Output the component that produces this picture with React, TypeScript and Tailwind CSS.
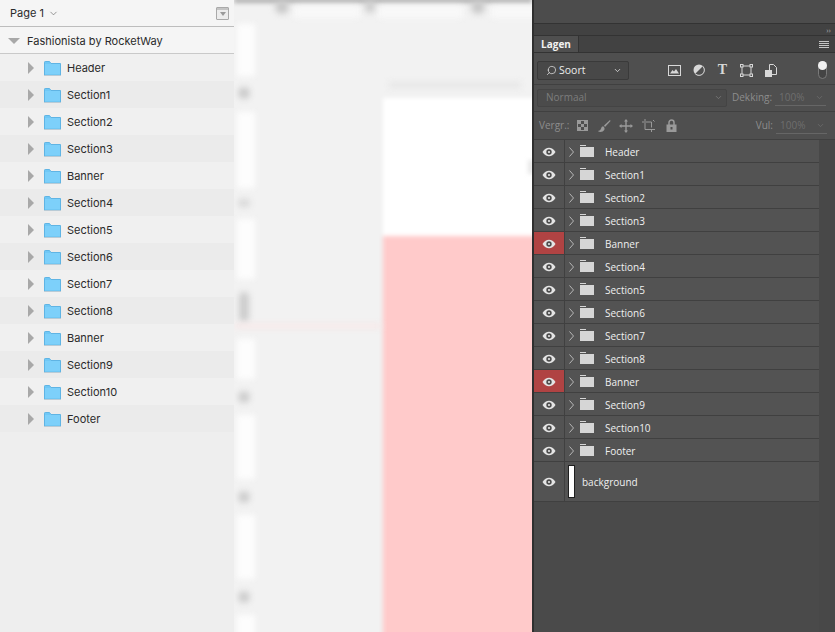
import { ChevronDown, Search } from "lucide-react";

const LAYERS = [
  "Header",
  "Section1",
  "Section2",
  "Section3",
  "Banner",
  "Section4",
  "Section5",
  "Section6",
  "Section7",
  "Section8",
  "Banner",
  "Section9",
  "Section10",
  "Footer",
];

function BlueFolder() {
  return (
    <svg width="17" height="15" viewBox="0 0 17 15" className="shrink-0">
      <path d="M0.5 14V1.2Q0.5 0.5 1.2 0.5H5.5L7 2.5H16.5V14Z" fill="#70c8f6" stroke="#5fb4e4" strokeWidth="1" />
      <rect x="1" y="3" width="15" height="10.5" fill="#7dd0fa" />
      <rect x="0" y="14" width="17" height="1" fill="#b9cbd6" />
    </svg>
  );
}

function GreyFolder() {
  return (
    <svg width="14" height="12" viewBox="0 0 14 12" className="shrink-0">
      <rect x="0" y="0" width="6" height="1" fill="#d6d6d6" />
      <rect x="0" y="2" width="14" height="10" fill="#d6d6d6" />
    </svg>
  );
}

function Eye() {
  return (
    <svg width="14" height="10" viewBox="0 0 14 10">
      <path d="M0.5 5C2.5 2 4.5 0.8 7 0.8S11.5 2 13.5 5C11.5 8 9.5 9.2 7 9.2S2.5 8 0.5 5Z" fill="#e4e4e4" />
      <circle cx="7" cy="5" r="2.7" fill="#4c4c4c" />
      <circle cx="7" cy="5" r="1.1" fill="#e4e4e4" />
    </svg>
  );
}

function ToolIcons() {
  return (
    <div className="flex items-center gap-[12px] text-[#d8d8d8]">
      <svg width="13" height="11" viewBox="0 0 13 11">
        <rect x="0.5" y="0.5" width="12" height="10" fill="none" stroke="currentColor" />
        <path d="M2 8.5L4.5 5L6 6.5L8 4L11 8.5Z" fill="currentColor" />
      </svg>
      <svg width="12" height="12" viewBox="0 0 12 12">
        <circle cx="6" cy="6" r="5.5" fill="currentColor" />
        <path d="M10 2L2 10A5.5 5.5 0 0 0 10 2Z" fill="#4f4f4f" />
        <path d="M9.8 2.3A5 5 0 0 1 2.3 9.8" fill="none" stroke="currentColor" />
      </svg>
      <span className="w-[11px] text-center font-['Liberation_Serif',serif] text-[14px] leading-none font-bold">T</span>
      <svg width="13" height="13" viewBox="0 0 13 13">
        <rect x="2" y="2" width="9" height="9" fill="none" stroke="currentColor" />
        <rect x="0.5" y="0.5" width="2.5" height="2.5" fill="#4f4f4f" stroke="currentColor" />
        <rect x="10" y="0.5" width="2.5" height="2.5" fill="#4f4f4f" stroke="currentColor" />
        <rect x="0.5" y="10" width="2.5" height="2.5" fill="#4f4f4f" stroke="currentColor" />
        <rect x="10" y="10" width="2.5" height="2.5" fill="#4f4f4f" stroke="currentColor" />
      </svg>
      <svg width="12" height="13" viewBox="0 0 12 13">
        <path d="M4.5 0.5H8.5L11.5 3.5V10.5H4.5Z" fill="none" stroke="currentColor" />
        <rect x="0" y="6" width="7" height="7" fill="currentColor" />
      </svg>
    </div>
  );
}

function LockIcons() {
  return (
    <div className="flex items-center text-[#9a9a9a]">
      <svg width="11" height="11" viewBox="0 0 11 11">
        <rect x="0.5" y="0.5" width="10" height="10" fill="none" stroke="currentColor" />
        <rect x="1" y="1" width="3" height="3" fill="currentColor" />
        <rect x="7" y="1" width="3" height="3" fill="currentColor" />
        <rect x="4" y="4" width="3" height="3" fill="currentColor" />
        <rect x="1" y="7" width="3" height="3" fill="currentColor" />
        <rect x="7" y="7" width="3" height="3" fill="currentColor" />
      </svg>
      <svg width="14" height="14" viewBox="0 0 14 14" className="ml-[9px]">
        <path d="M13 1L7 6.5L8 8L13.5 2Z" fill="currentColor" />
        <path d="M6.2 7.2C4 7.6 4.4 10 3 11.2C2.4 11.8 1.4 12 0.8 12C2.6 13.6 6 13.2 7.2 11C7.8 9.8 7.8 8.6 6.2 7.2Z" fill="currentColor" />
      </svg>
      <svg width="14" height="14" viewBox="0 0 14 14" className="ml-[8px]">
        <path d="M7 0L9 2.5H7.7V6.3H11.5V5L14 7L11.5 9V7.7H7.7V11.5H9L7 14L5 11.5H6.3V7.7H2.5V9L0 7L2.5 5V6.3H6.3V2.5H5Z" fill="currentColor" />
      </svg>
      <svg width="13" height="13" viewBox="0 0 13 13" className="ml-[9px]">
        <path d="M3 0V10.5H13M0 3H2M4 3H9.5V8.5" fill="none" stroke="currentColor" />
        <path d="M9.5 10V13M11 1L12.5 2.5" fill="none" stroke="currentColor" />
      </svg>
      <svg width="11" height="13" viewBox="0 0 11 13" className="ml-[11px]">
        <path d="M3 6V3.5A2.5 2.5 0 0 1 8 3.5V6" fill="none" stroke="currentColor" strokeWidth="1.5" />
        <rect x="0.5" y="5.5" width="10" height="7.5" fill="currentColor" />
        <rect x="4.5" y="8" width="2" height="2.5" fill="#4f4f4f" />
      </svg>
    </div>
  );
}

function PercentField() {
  return (
    <div className="mr-[8px] ml-[3px] flex w-[51px] items-center justify-between border-b border-[#666666] pr-[2px] pl-[4px] text-[#6e6e6e]">
      <span>100%</span>
      <ChevronDown size={9} />
    </div>
  );
}

function LeftPanel() {
  return (
    <aside className="flex h-full w-[234px] shrink-0 flex-col bg-[#f0f0f0] text-[11px] text-[#2a2a2a]">
      <div className="flex h-[27px] items-center justify-between border-b border-[#bdbdbd] bg-[#f5f5f5] pr-[5px] pl-[10px]">
        <div className="flex items-center gap-[4px]">
          <span>Page 1</span>
          <ChevronDown size={11} strokeWidth={1.5} className="text-[#6a6a6a]" />
        </div>
        <div className="flex h-[13px] w-[13px] flex-col rounded-[1px] border border-[#a9a9a9] bg-[#ececec]">
          <div className="h-[2px] bg-[#c4c4c4]" />
          <div className="mx-auto mt-[2px] h-0 w-0 border-x-[3px] border-t-[4px] border-x-transparent border-t-[#9a9a9a]" />
        </div>
      </div>
      <div className="flex h-[27px] items-center border-b border-[#c9c9c9] bg-[#f5f5f5] pt-[2px] pl-[8px]">
        <div className="h-0 w-0 border-x-[6px] border-t-[6px] border-x-transparent border-t-[#a8a8a8]" />
        <span className="ml-[7px]">Fashionista by RocketWay</span>
      </div>
      {LAYERS.map((name, i) => (
        <div key={i} className={`flex h-[27px] items-center pt-[1px] pl-[28px] ${i % 2 ? "bg-[#ebebeb]" : "bg-[#f0f0f0]"}`}>
          <div className="h-0 w-0 border-y-[6px] border-l-[6px] border-y-transparent border-l-[#a8a8a8]" />
          <div className="ml-[10px] flex">
            <BlueFolder />
          </div>
          <span className="ml-[6px]">{name}</span>
        </div>
      ))}
      <div className="flex-1 bg-[#eeeeee]" />
    </aside>
  );
}

function Canvas() {
  return (
    <main className="relative flex h-full min-w-0 flex-1 flex-col overflow-hidden bg-[#f2f2f2]">
      <div className="flex flex-1">
        <div className="w-[149px]" />
        {/* artboard, out of focus */}
        <div className="-mr-[8px] flex flex-1 flex-col blur-[2px]">
          <div className="h-[98px]" />
          <div className="h-[138px] bg-white" />
          <div className="-mb-[8px] flex-1 bg-[#ffcaca]" />
        </div>
      </div>
      {/* blurred bits of the canvas: free floating, everything is out of focus here */}
      <div className="absolute -top-[2px] right-0 left-0 h-[5px] bg-[#b0b0b0] blur-[2px]" />
      <div className="absolute top-[6px] left-[60px] h-[12px] w-[66px] bg-[#f9f9f9] blur-[3px]" />
      <div className="absolute top-[6px] left-[144px] h-[12px] w-[85px] bg-[#f9f9f9] blur-[3px]" />
      <div className="absolute top-[6px] left-[257px] h-[12px] w-[50px] bg-[#f9f9f9] blur-[3px]" />
      <div className="absolute top-[0px] left-[41px] h-[14px] w-[14px] rounded-full bg-[#c8c8c8] blur-[3px]" />
      <div className="absolute top-[0px] left-[131px] h-[13px] w-[10px] rounded-full bg-[#cccccc] blur-[3px]" />
      <div className="absolute top-[0px] left-[237px] h-[14px] w-[14px] rounded-full bg-[#c8c8c8] blur-[3px]" />
      <div className="absolute top-[82px] left-[155px] h-[6px] w-[132px] bg-[#e6e6e6] blur-[3px]" />
      <div className="absolute top-[160px] left-[294px] h-[14px] w-[6px] bg-[#e8e8e8] blur-[2px]" />
      {[
        "top-[24px] h-[52px]",
        "top-[112px] h-[76px]",
        "top-[219px] h-[60px]",
        "top-[339px] h-[40px]",
        "top-[415px] h-[64px]",
        "top-[515px] h-[64px]",
        "top-[615px] h-[30px]",
      ].map((c) => (
        <div key={c} className={`absolute left-[3px] w-[18px] bg-[#fdfdfd] blur-[3px] ${c}`} />
      ))}
      <div className="absolute top-[87px] left-[4px] h-[12px] w-[12px] rounded-full bg-[#cacaca] blur-[3px]" />
      <div className="absolute top-[199px] left-[4px] h-[8px] w-[12px] rounded-full bg-[#d8d8d8] blur-[3px]" />
      <div className="absolute top-[292px] left-[5px] h-[30px] w-[10px] rounded-full bg-[#cccccc] blur-[3px]" />
      <div className="absolute top-[391px] left-[4px] h-[12px] w-[12px] rounded-full bg-[#cccccc] blur-[3px]" />
      <div className="absolute top-[491px] left-[4px] h-[12px] w-[12px] rounded-full bg-[#cccccc] blur-[3px]" />
      <div className="absolute top-[591px] left-[4px] h-[12px] w-[12px] rounded-full bg-[#cccccc] blur-[3px]" />
      <div className="absolute top-[324px] left-0 h-[4px] w-[148px] bg-[#f9e6e6] blur-[3px]" />
    </main>
  );
}

function LayerRow({ name, red }: { name: string; red: boolean }) {
  return (
    <div className="flex h-[23px] items-start border-b border-[#404040] bg-[#535353]">
      <div className={`flex h-full w-[31px] items-center justify-center border-r border-[#404040] pt-[2px] ${red ? "bg-[#b04343]" : ""}`}>
        <Eye />
      </div>
      <svg width="5" height="10" viewBox="0 0 5 10" className="mt-[7px] ml-[4px] shrink-0">
        <path d="M0.5 0.5L4.5 5L0.5 9.5" fill="none" stroke="#b8b8b8" />
      </svg>
      <div className="mt-[5px] ml-[6px]">
        <GreyFolder />
      </div>
      <span className="mt-[3px] ml-[11px] text-[10px] leading-[18px] text-[#f0f0f0]">{name}</span>
    </div>
  );
}

function RightPanel() {
  return (
    <aside className="flex h-full w-[303px] shrink-0 flex-col border-l-2 border-[#2f2f2f] bg-[#4a4a4a] font-['Open_Sans',sans-serif] text-[10px]">
      <div className="h-[24px] border-b border-[#333333] bg-[#4c4c4c]" />
      <div className="flex h-[12px] items-center justify-end border-b border-[#333333] bg-[#424242] pr-[4px] text-[8px] leading-none text-[#a8a8a8]">
        ››
      </div>
      <div className="flex h-[17px] items-stretch justify-between border-b border-[#333333] bg-[#424242] pr-[6px]">
        <div className="flex w-[45px] items-center justify-center border-r border-[#333333] bg-[#4f4f4f] text-[10px] font-bold text-[#f2f2f2]">
          Lagen
        </div>
        <div className="flex flex-col justify-center gap-[1px]">
          <div className="h-[1px] w-[10px] bg-[#c4c4c4]" />
          <div className="h-[1px] w-[10px] bg-[#c4c4c4]" />
          <div className="h-[1px] w-[10px] bg-[#c4c4c4]" />
          <div className="h-[1px] w-[10px] bg-[#c4c4c4]" />
        </div>
      </div>

      {/* filter row */}
      <div className="flex h-[32px] items-center border-b border-[#404040] bg-[#4f4f4f] pt-[3px] pl-[3px]">
        <div className="flex h-[19px] w-[92px] items-center rounded-[2px] border border-[#3a3a3a] bg-[#484848] pr-[6px] pl-[8px] text-[#ececec]">
          <Search size={11} strokeWidth={1.5} className="-scale-x-100" />
          <span className="ml-[2px] pt-[1px] text-[10.5px]">Soort</span>
          <ChevronDown size={9} className="ml-auto" />
        </div>
        <div className="ml-[39px]">
          <ToolIcons />
        </div>
        <div className="relative mr-[8px] ml-auto h-[18px] w-[9px] rounded-full border border-[#7a7a7a] bg-[#444444]">
          <div className="absolute -top-[1px] -left-[1px] h-[9px] w-[9px] rounded-full bg-[#f0f0f0]" />
        </div>
      </div>

      {/* blend row */}
      <div className="flex h-[27px] items-center border-b border-[#404040] bg-[#4f4f4f] pb-[1px] pl-[3px] text-[#7d7d7d]">
        <div className="flex h-[18px] w-[190px] items-center rounded-[2px] border border-[#444444] bg-[#4b4b4b] pr-[3px] pl-[8px]">
          <span>Normaal</span>
          <ChevronDown size={9} className="ml-auto" />
        </div>
        <span className="ml-[5px] text-[#8d8d8d]">Dekking:</span>
        <PercentField />
      </div>

      {/* lock row */}
      <div className="flex h-[28px] items-center border-b border-[#404040] bg-[#4f4f4f] pl-[5px] text-[#8d8d8d]">
        <span>Vergr.:</span>
        <div className="ml-[8px]">
          <LockIcons />
        </div>
        <span className="ml-auto">Vul:</span>
        <PercentField />
      </div>

      {/* layers list plus scrollbar gutter */}
      <div className="flex flex-1">
        <div className="w-[285px]">
          {LAYERS.map((name, i) => (
            <LayerRow key={i} name={name} red={name === "Banner"} />
          ))}
          <div className="flex h-[40px] items-stretch border-b border-[#404040] bg-[#535353]">
            <div className="flex w-[31px] items-center justify-center border-r border-[#404040]">
              <Eye />
            </div>
            <div className="my-[3px] ml-[3px] w-[7px] border border-[#1f1f1f] bg-white" />
            <span className="ml-[7px] self-center pt-[1px] text-[10px] text-[#f0f0f0]">background</span>
          </div>
        </div>
        <div className="flex-1 bg-[#484848]" />
      </div>
    </aside>
  );
}

export default function App() {
  return (
    <div className="flex h-[632px] w-[835px] overflow-hidden bg-white font-['Inter',sans-serif]">
      <LeftPanel />
      <Canvas />
      <RightPanel />
    </div>
  );
}
